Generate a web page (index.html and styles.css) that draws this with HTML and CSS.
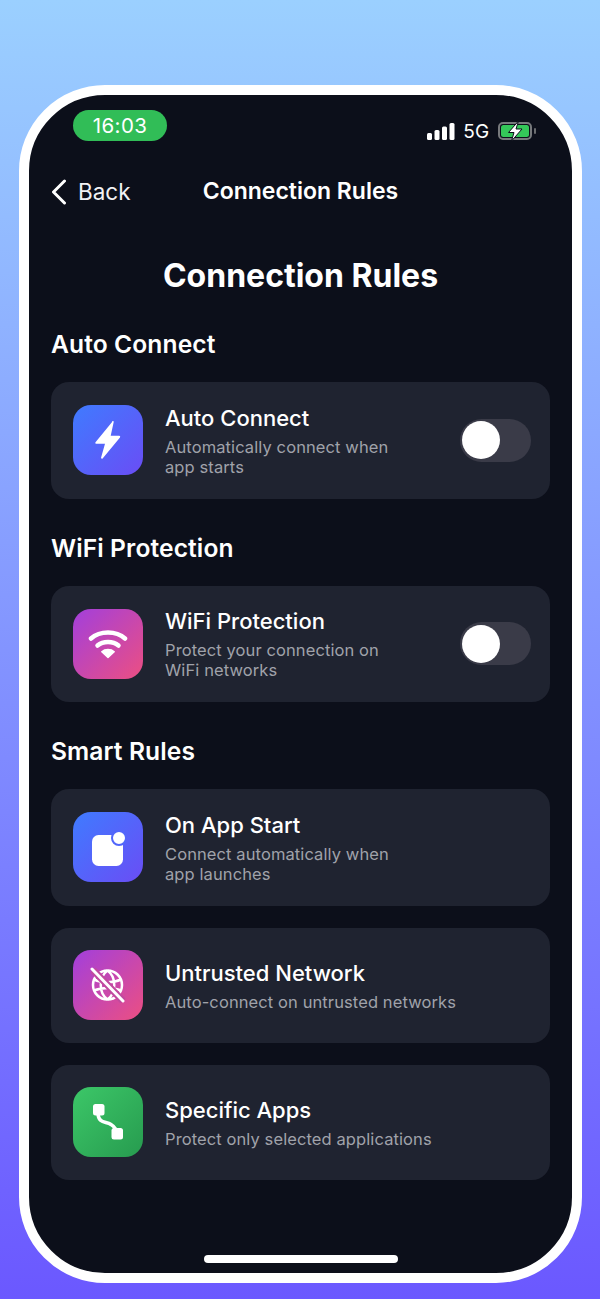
FILE: index.html
```html
<!DOCTYPE html>
<html lang="en">
<head>
    <meta charset="UTF-8">
    <meta name="viewport" content="width=device-width, initial-scale=1.0">
    <title>Connection Rules</title>
    <link rel="stylesheet" href="styles.css">
</head>
<body>
    <div class="phone">
        <div class="screen">

            <div class="status">
                <div class="time">16:03</div>
                <div class="status-right">
                    <svg class="signal" width="28" height="17" viewBox="0 0 28 17">
                        <rect x="0" y="10" width="5" height="7" rx="1.5" fill="#fff"/>
                        <rect x="7.5" y="7" width="5" height="10" rx="1.5" fill="#fff"/>
                        <rect x="15" y="3.5" width="5" height="13.5" rx="1.5" fill="#fff"/>
                        <rect x="22.5" y="0" width="5" height="17" rx="1.5" fill="#fff"/>
                    </svg>
                    <span class="net">5G</span>
                    <svg class="battery" width="39" height="20" viewBox="0 0 39 20">
                        <rect x="1" y="2" width="32" height="16" rx="4" fill="none" stroke="#77797c" stroke-width="2"/>
                        <rect x="3" y="4" width="28" height="12" rx="2.5" fill="#34c759"/>
                        <rect x="36" y="7" width="2" height="6" rx="1" fill="#6b6d70"/>
                        <path d="M20.5 0 10.5 11.5h5.5L13.5 20 24 8h-6z" fill="#fff" stroke="#0c0f1a" stroke-width="1"/>
                    </svg>
                </div>
            </div>

            <div class="nav">
                <div class="back">
                    <svg width="16" height="26" viewBox="0 0 16 26">
                        <path d="M13.5 2 2.5 13l11 11" fill="none" stroke="#fff" stroke-width="3" stroke-linecap="round" stroke-linejoin="round"/>
                    </svg>
                    <span>Back</span>
                </div>
                <div class="nav-title">Connection Rules</div>
            </div>

            <h1 class="title">Connection Rules</h1>

            <h2 class="section first">Auto Connect</h2>
            <div class="card">
                <div class="tile blue">
                    <svg width="30" height="40" viewBox="0 0 30 40">
                        <path d="M19.500 1.500 2.500 22.200c-.5.7 0 1.600.8 1.600h8.700L8.100 37.600c-.3 1 .9 1.600 1.500.8l17.400-21c.5-.7 0-1.600-.8-1.600h-8.500l3-13.700c.2-1-1-1.500-1.700-.6z" fill="#fff"/>
                    </svg>
                </div>
                <div class="text">
                    <div class="name">Auto Connect</div>
                    <div class="desc">Automatically connect when<br>app starts</div>
                </div>
                <div class="toggle"><div class="knob"></div></div>
            </div>

            <h2 class="section">WiFi Protection</h2>
            <div class="card">
                <div class="tile pink">
                    <svg width="40" height="32" viewBox="0 0 40 32">
                        <path d="M3 10.500C12 2.500 28 2.500 37 10.500" fill="none" stroke="#fff" stroke-width="4.500" stroke-linecap="round"/>
                        <path d="M9.500 17.500C15 12.800 25 12.800 30.500 17.500" fill="none" stroke="#fff" stroke-width="4.500" stroke-linecap="round"/>
                        <path d="M20 29.500 13.800 23.800C17 20.800 23 20.800 26.200 23.800z" fill="#fff" stroke="#fff" stroke-width="1.500" stroke-linejoin="round"/>
                    </svg>
                </div>
                <div class="text">
                    <div class="name">WiFi Protection</div>
                    <div class="desc">Protect your connection on<br>WiFi networks</div>
                </div>
                <div class="toggle"><div class="knob"></div></div>
            </div>

            <h2 class="section">Smart Rules</h2>
            <div class="card">
                <div class="tile blue">
                    <svg width="36" height="38" viewBox="0 0 36 38">
                        <rect x="2" y="7" width="31" height="31" rx="6.500" fill="#fff"/>
                        <circle cx="29" cy="10" r="7" fill="#fff" stroke="#5166fb" stroke-width="2"/>
                    </svg>
                </div>
                <div class="text">
                    <div class="name">On App Start</div>
                    <div class="desc">Connect automatically when<br>app launches</div>
                </div>
            </div>

            <div class="card short">
                <div class="tile pink">
                    <svg width="36" height="36" viewBox="0 0 36 36" fill="none" stroke="#fff" stroke-width="2.500">
                        <circle cx="17.500" cy="18" r="14.500"/>
                        <path d="M17.500 3.500C8.500 10 8.500 26 17.500 32.500M17.500 3.500C26.500 10 26.500 26 17.500 32.500M4 12.500C11.500 16 23.500 16 31 12.500M4 23.500C11.500 20 23.500 20 31 23.500"/>
                        <path d="M3 3 33 34" stroke="#c04a9f" stroke-width="7"/>
                        <path d="M2 2 33 34" stroke-width="3" stroke-linecap="round"/>
                    </svg>
                </div>
                <div class="text">
                    <div class="name">Untrusted Network</div>
                    <div class="desc">Auto-connect on untrusted networks</div>
                </div>
            </div>

            <div class="card short">
                <div class="tile green">
                    <svg width="32" height="36" viewBox="0 0 32 36">
                        <path d="M6 10C7 20 14 17 19 20.500 23 23 24.500 25 25 30" fill="none" stroke="#fff" stroke-width="3.500" stroke-linecap="round"/>
                        <rect x="1" y="0" width="11.500" height="11.500" rx="2.500" fill="#fff"/>
                        <rect x="19.500" y="24" width="11.500" height="11.500" rx="2.500" fill="#fff"/>
                    </svg>
                </div>
                <div class="text">
                    <div class="name">Specific Apps</div>
                    <div class="desc">Protect only selected applications</div>
                </div>
            </div>

            <div class="home"></div>
        </div>
    </div>
</body>
</html>
```

FILE: styles.css
```css
/*reset*/
html,body{
    margin: 0;
    padding: 0;
}

body{
    width: 600px;
    height: 1299px;
    overflow: hidden;
    background: linear-gradient(180deg, #9bd0ff 0%, #6b58ff 100%);
    font-family: "Inter", "Liberation Sans", sans-serif;
    color: #fff;
}

/*phone frame*/
.phone{
    box-sizing: border-box;
    width: 563px;
    height: 1198px;
    margin: 85px 0 0 19px;
    border: 10px solid #fff;
    border-radius: 86px;
    background: #0c0f1a;
    overflow: hidden;
}

.screen{
    height: 100%;
    padding: 0 22px;
    display: flex;
    flex-direction: column;
    position: relative;
}

/*status bar*/
.status{
    display: flex;
    justify-content: space-between;
    align-items: center;
    height: 31px;
    margin: 15px 13px 0 22px;
}

.time{
    width: 94px;
    height: 31px;
    line-height: 32px;
    text-align: center;
    border-radius: 16px;
    background: #31bd57;
    font-size: 20.5px;
    letter-spacing: 0.4px;
}

.status-right{
    display: flex;
    align-items: center;
    gap: 8.5px;
    margin-top: 11px;
}

.net{
    font-size: 19px;
    letter-spacing: 0.3px;
}

/*nav*/
.nav{
    height: 40px;
    margin-top: 30px;
    position: relative;
    display: flex;
    align-items: center;
    justify-content: center;
}

.back{
    position: absolute;
    left: 0;
    top: 7px;
    display: flex;
    align-items: center;
    gap: 11px;
    font-size: 22.5px;
    color: #f2f2f4;
}

.nav-title{
    font-size: 23px;
    font-weight: 600;
}

.title{
    margin: 40px 0 0;
    height: 50px;
    line-height: 50px;
    text-align: center;
    font-size: 32px;
    font-weight: 700;
}

.section{
    margin: 31px 0 20px;
    height: 36px;
    line-height: 36px;
    font-size: 24.6px;
    font-weight: 600;
    letter-spacing: 0.1px;
}

.section.first{
    margin-top: 25px;
}

/*cards*/
.card{
    box-sizing: border-box;
    height: 116.5px;
    padding: 0 19px 0 22px;
    display: flex;
    align-items: center;
    background: #1f2330;
    border-radius: 18px;
}

.card + .card{
    margin-top: 22.5px;
}

.card.short{
    height: 114.5px;
}

.tile{
    flex: none;
    width: 70px;
    height: 70px;
    margin-right: 22px;
    border-radius: 18px;
    display: flex;
    align-items: center;
    justify-content: center;
}

.blue{
    background: linear-gradient(135deg, #3f7bff, #6a4df5);
}

.pink{
    background: linear-gradient(135deg, #a23fdc, #ec4f82);
}

.green{
    background: linear-gradient(135deg, #3cc768, #279b4f);
}

.text{
    flex: 1;
}

.name{
    font-size: 22px;
    font-weight: 500;
    line-height: 28px;
}

.desc{
    margin-top: 5px;
    font-size: 16.5px;
    line-height: 20px;
    letter-spacing: 0.1px;
    color: #a0a2aa;
}

/*toggle*/
.toggle{
    flex: none;
    box-sizing: border-box;
    width: 71px;
    height: 43px;
    padding: 2.5px 2px;
    border-radius: 22px;
    background: #3a3b48;
}

.knob{
    width: 38px;
    height: 38px;
    border-radius: 50%;
    background: #fff;
}

.home{
    position: absolute;
    left: 175px;
    bottom: 10px;
    width: 194px;
    height: 8px;
    border-radius: 4px;
    background: #fff;
}
```
